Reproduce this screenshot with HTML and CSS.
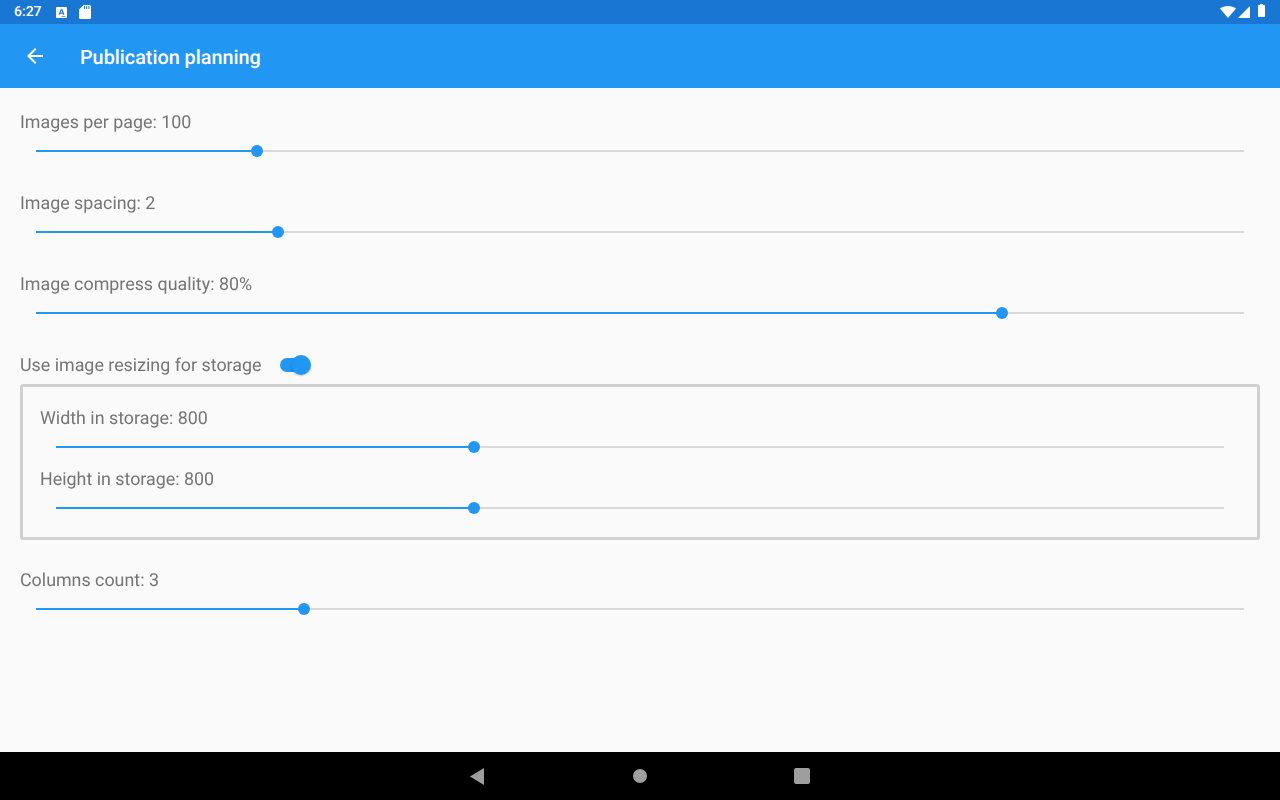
FILE: index.html
```html
<!DOCTYPE html>
<html lang="en">
<head>
    <meta charset="UTF-8">
    <meta name="viewport" content="width=device-width, initial-scale=1.0">
    <title>Publication planning</title>
    <link rel="stylesheet" href="styles.css">
</head>
<body>
    <div class="status-bar">
        <span class="clock">6:27</span>
        <svg class="note-a" width="11" height="11" viewBox="0 0 12 12">
            <path fill="#fff" fill-rule="evenodd" d="M1 0h10a1 1 0 0 1 1 1v10a1 1 0 0 1-1 1H1a1 1 0 0 1-1-1V1a1 1 0 0 1 1-1zM5 2.500 2.800 8.500h1.400l.4-1.200h2.800l.4 1.200h1.400L7 2.500zM5 6.100l1-2.600 1 2.600z"/>
            <path fill="#1976d2" d="M6 10h4v.7H6z"/>
        </svg>
        <svg class="note-sd" width="12" height="14" viewBox="0 0 12 14">
            <path fill="#fff" fill-rule="evenodd" d="M4.500 0H10.500A1.500 1.500 0 0 1 12 1.500v11a1.500 1.500 0 0 1-1.500 1.500H1.500A1.500 1.500 0 0 1 0 12.500V4.500zM5 1v3h1V1zM7.200 1v3h1V1zM9.400 1v3h1V1z"/>
        </svg>
        <span class="status-spacer"></span>
        <svg class="wifi" width="16" height="12" viewBox="0 0 16 12"><path fill="#fff" d="M0 2.600C2 1 4.800 0 8 0s6 1 8 2.600L8 12z"/></svg>
        <svg class="signal" width="12" height="12" viewBox="0 0 12 12"><path fill="#fff" d="M12 0v12H0z"/></svg>
        <svg class="battery" width="7" height="13" viewBox="0 0 7 13"><path fill="#fff" d="M2 0h3v1h1.200c.4 0 .8.400.8.800v10.400c0 .4-.4.800-.8.800H.8c-.4 0-.8-.4-.8-.8V1.800C0 1.400.4 1 .8 1H2z"/></svg>
    </div>

    <div class="app-bar">
        <svg class="back" width="16" height="16" viewBox="0 0 16 16"><path fill="#fff" d="M16 7H3.800l5.600-5.600L8 0 0 8l8 8 1.400-1.400L3.800 9H16z"/></svg>
        <h1>Publication planning</h1>
    </div>

    <div class="content">
        <div class="setting">
            <div class="label">Images per page: 100</div>
            <div class="slider"><div class="fill" style="width: 18.29%"></div><div class="rest"></div><div class="thumb" style="left: 18.29%"></div></div>
        </div>
        <div class="setting">
            <div class="label">Image spacing: 2</div>
            <div class="slider"><div class="fill" style="width: 20.03%"></div><div class="rest"></div><div class="thumb" style="left: 20.03%"></div></div>
        </div>
        <div class="setting">
            <div class="label">Image compress quality: 80%</div>
            <div class="slider"><div class="fill" style="width: 79.97%"></div><div class="rest"></div><div class="thumb" style="left: 79.97%"></div></div>
        </div>

        <div class="switch-row">
            <div class="label">Use image resizing for storage</div>
            <div class="switch"><div class="knob"></div></div>
        </div>

        <div class="resize-box">
            <div class="setting inner">
                <div class="label">Width in storage: 800</div>
                <div class="slider"><div class="fill" style="width: 35.79%"></div><div class="rest"></div><div class="thumb" style="left: 35.79%"></div></div>
            </div>
            <div class="setting inner">
                <div class="label">Height in storage: 800</div>
                <div class="slider"><div class="fill" style="width: 35.79%"></div><div class="rest"></div><div class="thumb" style="left: 35.79%"></div></div>
            </div>
        </div>

        <div class="setting">
            <div class="label">Columns count: 3</div>
            <div class="slider"><div class="fill" style="width: 22.19%"></div><div class="rest"></div><div class="thumb" style="left: 22.19%"></div></div>
        </div>
    </div>

    <div class="nav-bar">
        <svg width="14" height="17" viewBox="0 0 14 17"><path fill="#9e9e9e" d="M14 0v17L0 8.500z"/></svg>
        <div class="nav-circle"></div>
        <div class="nav-square"></div>
    </div>
</body>
</html>
```

FILE: styles.css
```css
body {
    font-family: 'Roboto', sans-serif;
    margin: 0;
    padding: 0;
    height: 800px;
    display: flex;
    flex-direction: column;
    background: #FAFAFA;
    overflow: hidden;
    text-rendering: geometricPrecision;
}

.status-bar {
    height: 24px;
    background: #1976D2;
    display: flex;
    align-items: center;
    padding: 0 15px 0 14px;
    color: #FFFFFF;
    flex-shrink: 0;
}

.clock {
    font-size: 14px;
    font-weight: 500;
    margin-right: 14px;
}

.note-a {
    margin-right: 12px;
}

.status-spacer {
    flex: 1;
}

.wifi {
    margin-top: -1px;
}

.signal {
    margin-left: 2px;
    margin-right: 8px;
}

.battery {
    margin-top: -3px;
}

.app-bar {
    height: 64px;
    background: #2196F3;
    display: flex;
    align-items: center;
    padding-left: 27px;
    flex-shrink: 0;
}

.back {
    margin-right: 37px;
}

.app-bar h1 {
    margin: 2px 0 0;
    font-size: 19.8px;
    font-weight: 500;
    color: #FFFFFF;
}

.content {
    flex: 1;
    padding: 24px 20px 0;
}

.label {
    font-size: 17.85px;
    line-height: 22px;
    color: #757575;
    will-change: transform;
}

.setting {
    margin-bottom: 32px;
}

.slider {
    position: relative;
    height: 20px;
    margin: 7px 16px 0;
    display: flex;
    align-items: center;
}

.fill {
    height: 2px;
    background: #2196F3;
}

.rest {
    flex: 1;
    height: 2px;
    background: #D9D9D9;
}

.thumb {
    position: absolute;
    top: 4px;
    width: 12px;
    height: 12px;
    margin-left: -6px;
    border-radius: 50%;
    background: #2196F3;
}

.switch-row {
    display: flex;
    align-items: center;
    height: 22px;
    margin-bottom: 7px;
}

.switch {
    position: relative;
    width: 30px;
    height: 14px;
    margin: 0 0 2px 19px;
    border-radius: 7px;
    background: #2196F3;
}

.knob {
    position: absolute;
    top: -3px;
    right: -1px;
    width: 20px;
    height: 20px;
    border-radius: 50%;
    background: #2196F3;
    box-shadow: 0 1px 2px rgba(0, 0, 0, 0.2);
}

.resize-box {
    border: 3px solid #D0D0D0;
    border-radius: 3px;
    padding: 21px 17px 19px;
    margin-bottom: 30px;
}

.setting.inner {
    margin-bottom: 12px;
}

.setting.inner:last-child {
    margin-bottom: 0;
}

.nav-bar {
    height: 48px;
    background: #000000;
    flex-shrink: 0;
    display: flex;
    align-items: center;
    padding-left: 470px;
}

.nav-circle {
    width: 14px;
    height: 14px;
    border-radius: 50%;
    background: #9E9E9E;
    margin-left: 149px;
}

.nav-square {
    width: 16px;
    height: 16px;
    border-radius: 2px;
    background: #9E9E9E;
    margin-left: 147px;
}
```
